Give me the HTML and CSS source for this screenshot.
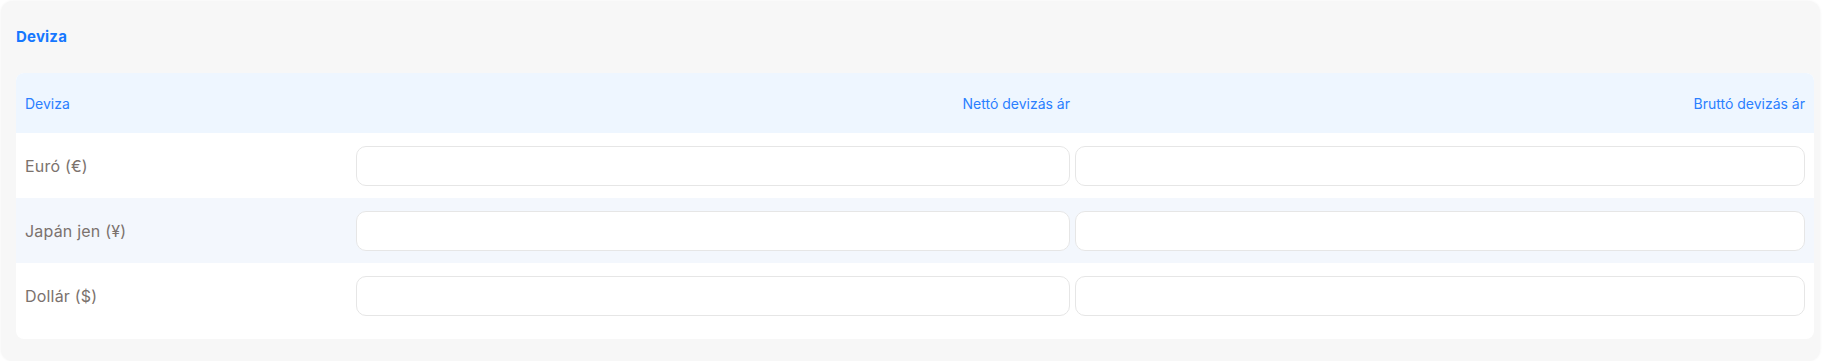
FILE: index.html
```html
<!DOCTYPE html>
<html lang="hu">
<head>
  <meta charset="UTF-8">
  <meta name="viewport" content="width=device-width, initial-scale=1.0">
  <title>Deviza</title>
  <link rel="stylesheet" href="styles.css">
</head>
<body>
  <div class="card">
    <h2 class="card-title">Deviza</h2>
    <div class="table">
      <div class="row head">
        <div class="cell first">Deviza</div>
        <div class="cell mid right">Nettó devizás ár</div>
        <div class="cell last right">Bruttó devizás ár</div>
      </div>
      <div class="row">
        <div class="cell first label">Euró (€)</div>
        <div class="cell mid"><input class="field" type="text"></div>
        <div class="cell last"><input class="field" type="text"></div>
      </div>
      <div class="row alt">
        <div class="cell first label">Japán jen (¥)</div>
        <div class="cell mid"><input class="field" type="text"></div>
        <div class="cell last"><input class="field" type="text"></div>
      </div>
      <div class="row">
        <div class="cell first label">Dollár ($)</div>
        <div class="cell mid"><input class="field" type="text"></div>
        <div class="cell last"><input class="field" type="text"></div>
      </div>
    </div>
  </div>
</body>
</html>
```

FILE: styles.css
```css
body {
  margin: 0;
  padding: 1px 0 0 1px;
  font-family: Inter, "Noto Sans", sans-serif;
  background: #ffffff;
}
.card {
  width: 1819px;
  height: 360px;
  box-sizing: border-box;
  background: #f7f7f7;
  border-radius: 12px;
  box-shadow: 0 0 3px rgba(0, 0, 0, 0.06);
  padding: 0 6px 0 15px;
}
.card-title {
  margin: 0;
  height: 72px;
  line-height: 72px;
  font-size: 15px;
  font-weight: 700;
  letter-spacing: 0.2px;
  color: #1677ff;
}
.table {
  background: #ffffff;
  border-radius: 8px;
  padding-bottom: 11px;
  overflow: hidden;
}
.row {
  display: grid;
  grid-template-columns: 340px 716px 1fr;
  height: 65px;
  align-items: center;
}
.row.head {
  height: 60px;
  background: #eef6ff;
  color: #2b7fff;
  font-size: 14px;
}
.row.alt {
  background: #f3f7fd;
}
.cell {
  display: flex;
  align-items: center;
  height: 100%;
}
.cell.first {
  padding-left: 9px;
}
.cell.mid {
  padding-right: 2px;
}
.cell.last {
  padding: 0 9px 0 3px;
}
.cell.right {
  justify-content: flex-end;
}
.label {
  font-size: 16px;
  letter-spacing: 0.2px;
  color: #7b726d;
}
.field {
  width: 100%;
  height: 40px;
  box-sizing: border-box;
  border: 1px solid #e6e6e6;
  border-radius: 10px;
  background: #ffffff;
  outline: none;
}
```
